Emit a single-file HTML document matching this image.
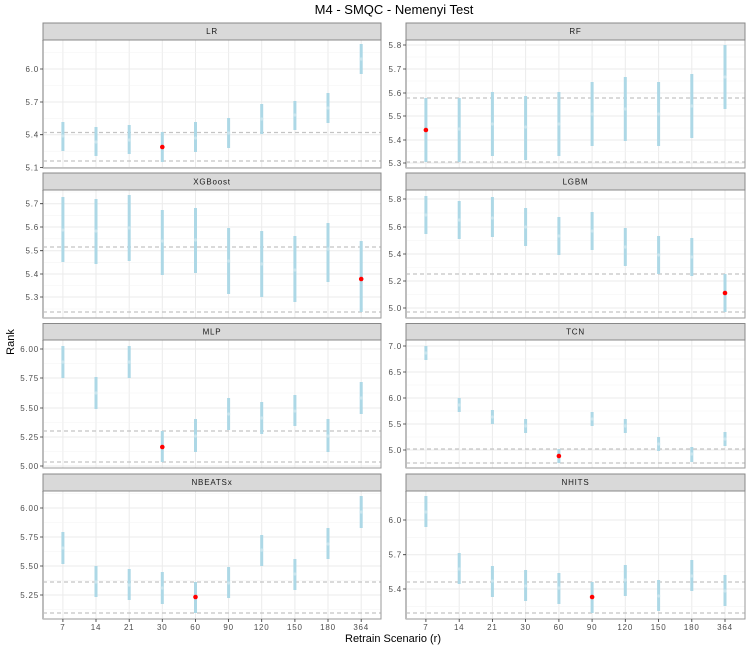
<!DOCTYPE html>
<html><head><meta charset="utf-8"><style>
html,body{margin:0;padding:0;background:#fff;}
svg{display:block;font-family:"Liberation Sans",sans-serif;}
.tk{font-size:8px;fill:#4d4d4d;letter-spacing:0.8px;}
.st{font-size:8px;fill:#1a1a1a;letter-spacing:0.8px;}
.gM{stroke:#ebebeb;stroke-width:1;}
.gm{stroke:#f3f3f3;stroke-width:0.6;}
.bar{stroke:#add8e6;stroke-width:3;fill:none;}
.mid{fill:#c9e5ee;}
.red{fill:#ff0000;}
.dash{stroke:#c4c4c4;stroke-width:1.2;stroke-dasharray:4 3;}
.pb{fill:none;stroke:#9a9a9a;stroke-width:1;}
.ax{stroke:#bdbdbd;stroke-width:2;}
.strip{fill:#d9d9d9;stroke:#888;stroke-width:1;}
.tick{stroke:#333;stroke-width:0.8;}
</style></head><body>
<svg width="750" height="650" viewBox="0 0 750 650">
<text x="394" y="14" font-size="13" text-anchor="middle" fill="#000">M4 - SMQC - Nemenyi Test</text>
<text transform="translate(14,342) rotate(-90)" font-size="11" text-anchor="middle" fill="#000">Rank</text>
<text x="393" y="642" font-size="11" text-anchor="middle" fill="#000">Retrain Scenario (r)</text>

<!-- vertical gridlines -->
<path class="gM" d="M62.9 40V168M96 40V168M129.2 40V168M162.3 40V168M195.5 40V168M228.6 40V168M261.7 40V168M294.9 40V168M328 40V168M361.2 40V168
M62.9 190V318M96 190V318M129.2 190V318M162.3 190V318M195.5 190V318M228.6 190V318M261.7 190V318M294.9 190V318M328 190V318M361.2 190V318
M62.9 340V468M96 340V468M129.2 340V468M162.3 340V468M195.5 340V468M228.6 340V468M261.7 340V468M294.9 340V468M328 340V468M361.2 340V468
M62.9 491V619M96 491V619M129.2 491V619M162.3 491V619M195.5 491V619M228.6 491V619M261.7 491V619M294.9 491V619M328 491V619M361.2 491V619
M425.9 40V168M459.2 40V168M492.4 40V168M525.6 40V168M558.9 40V168M592.1 40V168M625.3 40V168M658.6 40V168M691.8 40V168M725 40V168
M425.9 190V318M459.2 190V318M492.4 190V318M525.6 190V318M558.9 190V318M592.1 190V318M625.3 190V318M658.6 190V318M691.8 190V318M725 190V318
M425.9 340V468M459.2 340V468M492.4 340V468M525.6 340V468M558.9 340V468M592.1 340V468M625.3 340V468M658.6 340V468M691.8 340V468M725 340V468
M425.9 491V619M459.2 491V619M492.4 491V619M525.6 491V619M558.9 491V619M592.1 491V619M625.3 491V619M658.6 491V619M691.8 491V619M725 491V619"/>
<!-- minor horizontal -->
<path class="gm" d="M43 52.5H381M43 85.5H381M43 118.3H381M43 151.2H381
M406 57H745M406 81H745M406 104.5H745M406 128H745M406 151.5H745
M43 192H381M43 215.3H381M43 238.8H381M43 262.3H381M43 285.5H381M43 309H381
M406 213H745M406 240.5H745M406 267.5H745M406 294.5H745
M43 363.5H381M43 393H381M43 422.5H381M43 451.5H381
M406 359H745M406 385H745M406 411H745M406 437H745M406 463H745
M43 493.5H381M43 522.5H381M43 551.5H381M43 580.5H381M43 609.5H381
M406 502.7H745M406 537.3H745M406 571.8H745M406 606.3H745"/>
<!-- major horizontal -->
<path class="gM" d="M43 69H381M43 102H381M43 134.7H381M43 167.5H381
M406 45H745M406 69H745M406 93H745M406 116H745M406 140H745M406 163H745
M43 203.7H381M43 227H381M43 250.7H381M43 274H381M43 297H381
M406 199H745M406 227H745M406 254H745M406 281H745M406 308H745
M43 349H381M43 378H381M43 408H381M43 437H381M43 466H381
M406 346H745M406 372H745M406 398H745M406 424H745M406 450H745
M43 508H381M43 537H381M43 566H381M43 595H381
M406 520H745M406 554.7H745M406 589H745"/>
<!-- dashed -->
<path class="dash" d="M43 132.5H381M43 161H381M406 98H745M406 162H745
M43 247H381M43 312H381M406 274H745M406 312H745
M43 431H381M43 462H381M406 449H745M406 463H745
M43 582H381M43 613H381M406 582H745M406 613H745"/>

<!-- bars -->
<path class="bar" d="M62.9 122V151M96 127V156M129.2 125V154M162.3 132V162M195.5 122V152M228.6 118V148M261.7 104V134M294.9 101V130M328 93V123M361.2 44V74
M425.9 98V162M459.2 98V162M492.4 92V156M525.6 96V160M558.9 92V156M592.1 82V146M625.3 77V141M658.6 82V146M691.8 74V138M725 45V109
M62.9 197V262M96 199V264M129.2 195V261M162.3 210V275M195.5 208V273M228.6 228V294M261.7 231V297M294.9 236V302M328 223V282M361.2 241V312
M425.9 196V234M459.2 201V239M492.4 197V237M525.6 208V246M558.9 217V255M592.1 212V250M625.3 228V266M658.6 236V274M691.8 238V276M725 274V312
M62.9 346V378M96 377V409M129.2 346V378M162.3 431V462M195.5 419V452M228.6 398V430M261.7 402V434M294.9 395V426M328 419V452M361.2 382V414
M425.9 346V360M459.2 398V412M492.4 410V424M525.6 419V433M558.9 449V463M592.1 412V426M625.3 419V433M658.6 437V451M691.8 447V462M725 432V446
M62.9 532V564M96 566V597M129.2 569V600M162.3 572V604M195.5 582V613M228.6 567V598M261.7 535V566M294.9 559V590M328 528V559M361.2 496V528
M425.9 496V527M459.2 553V584M492.4 566V597M525.6 570V601M558.9 573V604M592.1 582V613M625.3 565V596M658.6 580V611M691.8 560V591M725 575V606"/>
<!-- midpoints -->
<g class="mid">
<circle cx="62.9" cy="136" r="1.6"/><circle cx="96" cy="142" r="1.6"/><circle cx="129.2" cy="140" r="1.6"/><circle cx="195.5" cy="138" r="1.6"/><circle cx="228.6" cy="133" r="1.6"/><circle cx="261.7" cy="119" r="1.6"/><circle cx="294.9" cy="115" r="1.6"/><circle cx="328" cy="108" r="1.6"/><circle cx="361.2" cy="59" r="1.6"/>
<circle cx="459.2" cy="129" r="1.6"/><circle cx="492.4" cy="124" r="1.6"/><circle cx="525.6" cy="127" r="1.6"/><circle cx="558.9" cy="124" r="1.6"/><circle cx="592.1" cy="114" r="1.6"/><circle cx="625.3" cy="109" r="1.6"/><circle cx="658.6" cy="114" r="1.6"/><circle cx="691.8" cy="106" r="1.6"/><circle cx="725" cy="77" r="1.6"/>
<circle cx="62.9" cy="230" r="1.6"/><circle cx="96" cy="231" r="1.6"/><circle cx="129.2" cy="228" r="1.6"/><circle cx="162.3" cy="241" r="1.6"/><circle cx="195.5" cy="240" r="1.6"/><circle cx="228.6" cy="261" r="1.6"/><circle cx="261.7" cy="264" r="1.6"/><circle cx="294.9" cy="270" r="1.6"/><circle cx="328" cy="249" r="1.6"/>
<circle cx="425.9" cy="215" r="1.6"/><circle cx="459.2" cy="220" r="1.6"/><circle cx="492.4" cy="218" r="1.6"/><circle cx="525.6" cy="227" r="1.6"/><circle cx="558.9" cy="236" r="1.6"/><circle cx="592.1" cy="231" r="1.6"/><circle cx="625.3" cy="247" r="1.6"/><circle cx="658.6" cy="255" r="1.6"/><circle cx="691.8" cy="257" r="1.6"/>
<circle cx="62.9" cy="362" r="1.6"/><circle cx="96" cy="393" r="1.6"/><circle cx="129.2" cy="362" r="1.6"/><circle cx="195.5" cy="436" r="1.6"/><circle cx="228.6" cy="414" r="1.6"/><circle cx="261.7" cy="418" r="1.6"/><circle cx="294.9" cy="411" r="1.6"/><circle cx="328" cy="436" r="1.6"/><circle cx="361.2" cy="398" r="1.6"/>
<circle cx="425.9" cy="353" r="1.6"/><circle cx="459.2" cy="405" r="1.6"/><circle cx="492.4" cy="417" r="1.6"/><circle cx="525.6" cy="426" r="1.6"/><circle cx="592.1" cy="419" r="1.6"/><circle cx="625.3" cy="426" r="1.6"/><circle cx="658.6" cy="444" r="1.6"/><circle cx="691.8" cy="454" r="1.6"/><circle cx="725" cy="439" r="1.6"/>
<circle cx="62.9" cy="548" r="1.6"/><circle cx="96" cy="582" r="1.6"/><circle cx="129.2" cy="585" r="1.6"/><circle cx="162.3" cy="588" r="1.6"/><circle cx="228.6" cy="583" r="1.6"/><circle cx="261.7" cy="550" r="1.6"/><circle cx="294.9" cy="574" r="1.6"/><circle cx="328" cy="544" r="1.6"/><circle cx="361.2" cy="512" r="1.6"/>
<circle cx="425.9" cy="512" r="1.6"/><circle cx="459.2" cy="569" r="1.6"/><circle cx="492.4" cy="581" r="1.6"/><circle cx="525.6" cy="586" r="1.6"/><circle cx="558.9" cy="588" r="1.6"/><circle cx="625.3" cy="580" r="1.6"/><circle cx="658.6" cy="596" r="1.6"/><circle cx="691.8" cy="576" r="1.6"/><circle cx="725" cy="591" r="1.6"/>
</g>
<g class="red">
<circle cx="162.3" cy="147" r="2.3"/><circle cx="425.9" cy="130" r="2.3"/>
<circle cx="361.2" cy="279" r="2.3"/><circle cx="725" cy="293" r="2.3"/>
<circle cx="162.3" cy="447" r="2.3"/><circle cx="558.9" cy="456" r="2.3"/>
<circle cx="195.5" cy="597" r="2.3"/><circle cx="592.1" cy="597" r="2.3"/>
</g>

<!-- panel borders -->
<path class="pb" d="M43 40H381V168H43ZM406 40H745V168H406ZM43 190H381V318H43ZM406 190H745V318H406ZM43 340H381V468H43ZM406 340H745V468H406ZM43 491H381V619H43ZM406 491H745V619H406Z"/>
<path class="ax" d="M43 40V168M406 40V168M43 190V318M406 190V318M43 340V468M406 340V468M43 491V619M406 491V619"/>

<!-- strips -->
<rect class="strip" x="43" y="23" width="338" height="17"/><text class="st" x="212" y="34" text-anchor="middle">LR</text>
<rect class="strip" x="406" y="23" width="339" height="17"/><text class="st" x="575.5" y="34" text-anchor="middle">RF</text>
<rect class="strip" x="43" y="173" width="338" height="17"/><text class="st" x="212" y="184.5" text-anchor="middle">XGBoost</text>
<rect class="strip" x="406" y="173" width="339" height="17"/><text class="st" x="575.5" y="184.5" text-anchor="middle">LGBM</text>
<rect class="strip" x="43" y="323.5" width="338" height="16.5"/><text class="st" x="212" y="334.5" text-anchor="middle">MLP</text>
<rect class="strip" x="406" y="323.5" width="339" height="16.5"/><text class="st" x="575.5" y="334.5" text-anchor="middle">TCN</text>
<rect class="strip" x="43" y="474" width="338" height="17"/><text class="st" x="212" y="485" text-anchor="middle">NBEATSx</text>
<rect class="strip" x="406" y="474" width="339" height="17"/><text class="st" x="575.5" y="485" text-anchor="middle">NHITS</text>

<!-- y ticks -->
<path class="tick" d="M40 69H43M40 102H43M40 134.7H43M40 167.5H43M403 45H406M403 69H406M403 93H406M403 116H406M403 140H406M403 163H406
M40 203.7H43M40 227H43M40 250.7H43M40 274H43M40 297H43M403 199H406M403 227H406M403 254H406M403 281H406M403 308H406
M40 349H43M40 378H43M40 408H43M40 437H43M40 466H43M403 346H406M403 372H406M403 398H406M403 424H406M403 450H406
M40 508H43M40 537H43M40 566H43M40 595H43M403 520H406M403 554.7H406M403 589H406
M62.9 619V622M96 619V622M129.2 619V622M162.3 619V622M195.5 619V622M228.6 619V622M261.7 619V622M294.9 619V622M328 619V622M361.2 619V622
M425.9 619V622M459.2 619V622M492.4 619V622M525.6 619V622M558.9 619V622M592.1 619V622M625.3 619V622M658.6 619V622M691.8 619V622M725 619V622"/>
<g class="tk" text-anchor="end">
<text x="39" y="72">6.0</text><text x="39" y="105">5.7</text><text x="39" y="137.7">5.4</text><text x="39" y="170.5">5.1</text>
<text x="402" y="48">5.8</text><text x="402" y="72">5.7</text><text x="402" y="96">5.6</text><text x="402" y="119">5.5</text><text x="402" y="143">5.4</text><text x="402" y="166">5.3</text>
<text x="39" y="206.7">5.7</text><text x="39" y="230">5.6</text><text x="39" y="253.7">5.5</text><text x="39" y="277">5.4</text><text x="39" y="300">5.3</text>
<text x="402" y="202">5.8</text><text x="402" y="230">5.6</text><text x="402" y="257">5.4</text><text x="402" y="284">5.2</text><text x="402" y="311">5.0</text>
<text x="39" y="352">6.00</text><text x="39" y="381">5.75</text><text x="39" y="411">5.50</text><text x="39" y="440">5.25</text><text x="39" y="469">5.00</text>
<text x="402" y="349">7.0</text><text x="402" y="375">6.5</text><text x="402" y="401">6.0</text><text x="402" y="427">5.5</text><text x="402" y="453">5.0</text>
<text x="39" y="511">6.00</text><text x="39" y="540">5.75</text><text x="39" y="569">5.50</text><text x="39" y="598">5.25</text>
<text x="402" y="523">6.0</text><text x="402" y="557.7">5.7</text><text x="402" y="592">5.4</text>
</g>
<g class="tk" text-anchor="middle">
<text x="62.9" y="630">7</text><text x="96" y="630">14</text><text x="129.2" y="630">21</text><text x="162.3" y="630">30</text><text x="195.5" y="630">60</text><text x="228.6" y="630">90</text><text x="261.7" y="630">120</text><text x="294.9" y="630">150</text><text x="328" y="630">180</text><text x="361.2" y="630">364</text>
<text x="425.9" y="630">7</text><text x="459.2" y="630">14</text><text x="492.4" y="630">21</text><text x="525.6" y="630">30</text><text x="558.9" y="630">60</text><text x="592.1" y="630">90</text><text x="625.3" y="630">120</text><text x="658.6" y="630">150</text><text x="691.8" y="630">180</text><text x="725" y="630">364</text>
</g>
</svg>
</body></html>
